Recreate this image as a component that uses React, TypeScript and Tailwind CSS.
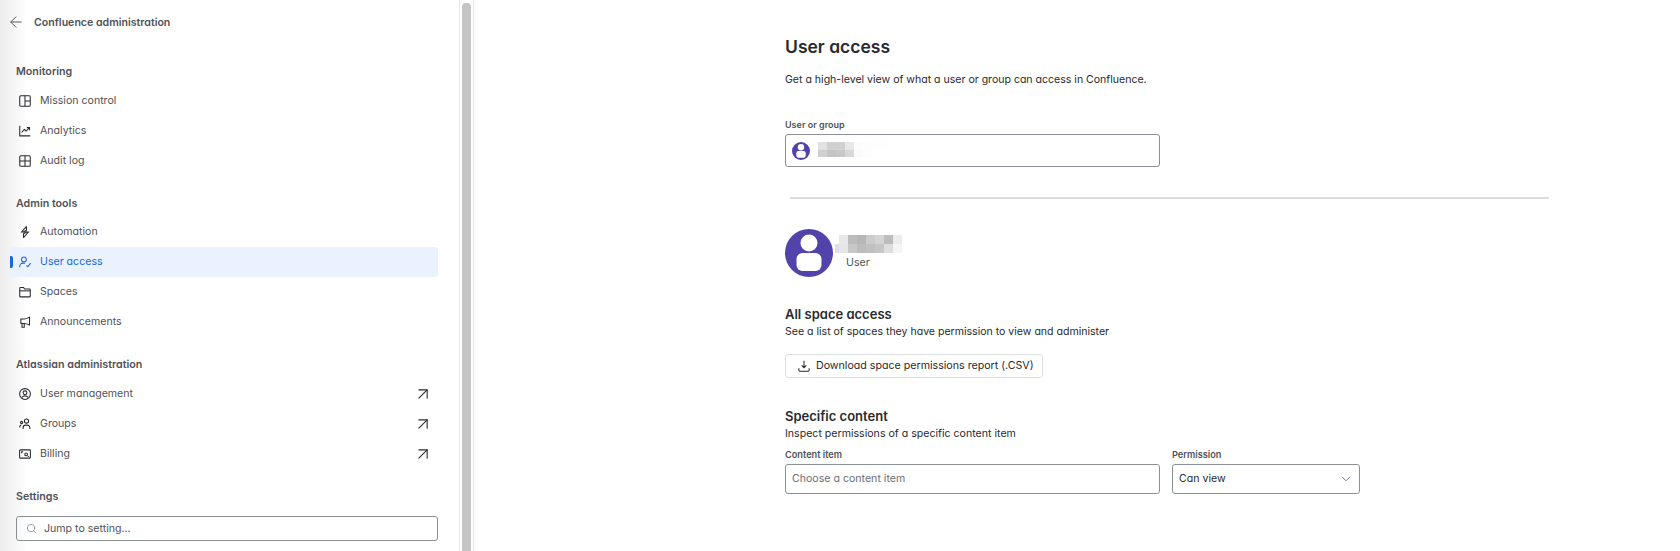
import React from "react";
import { ArrowLeft, ArrowUpRight, ChevronDown, Search } from "lucide-react";

const Ico = ({ d, className = "text-[#292a2e]" }: { d: React.ReactNode; className?: string }) => (
  <svg width="12" height="12" viewBox="0 0 16 16" fill="none" stroke="currentColor" strokeWidth="1.4" className={"shrink-0 " + className}>
    {d}
  </svg>
);

const icons: Record<string, React.ReactNode> = {
  mission: <><rect x="1" y="1" width="14" height="14" rx="1.5" /><path d="M8 1v14M8 8h7" /></>,
  analytics: <><path d="M1 1v13.500h14" /><path d="M3.500 10l3.500-4 2.500 2 4-4M10.500 3.500h3.500v3.500" /></>,
  audit: <><rect x="1" y="1" width="14" height="14" rx="1.5" /><path d="M8 1v14M1 8h14" /></>,
  automation: <><path d="M10 0.500L3.500 8h9L6 15.500" /><path d="M10 0.500v5L6 8M6 15.500v-5L10 8" /></>,
  user: <><circle cx="6.500" cy="4.500" r="3.200" /><path d="M1 15v-1.500a4 4 0 0 1 4-4h3" /><path d="M10 12.500l1.800 1.800 3.700-4.800" /></>,
  spaces: <><path d="M1 13.500V3a1 1 0 0 1 1-1h4l1.500 2H14a1 1 0 0 1 1 1v8.500a1 1 0 0 1-1 1H2a1 1 0 0 1-1-1z" /><path d="M1 6.500h14" /></>,
  announce: <><path d="M14 1.500v10.500c-2-1-4-2-7-2H2.500V4H7c3 0 5-1.500 7-2.500z" /><path d="M4 10v5h3v-5" /></>,
  mgmt: <><circle cx="8" cy="8" r="7.200" /><circle cx="8" cy="6.300" r="2.500" /><path d="M3.800 12.500c1-1.300 2.500-2 4.200-2s3.200 0.700 4.200 2" /></>,
  groups: <><circle cx="10" cy="4" r="2.800" /><path d="M5.500 14.500v-1.500a3.500 3.500 0 0 1 3.500-3.500h2a3.500 3.500 0 0 1 3.500 3.500v1.500" /><circle cx="3.500" cy="6" r="1.500" /><path d="M1 12.500v-1a2 2 0 0 1 2-2" /></>,
  billing: <><rect x="0.800" y="2.500" width="14.400" height="11" rx="1" /><circle cx="9.500" cy="8.500" r="1.800" /><path d="M3.500 7V5h2M12.500 12v-1.500" /></>,
};

const NavItem = ({ icon, label, active, ext }: { icon: string; label: string; active?: boolean; ext?: boolean }) => (
  <div className={"relative h-[30px] flex items-center pl-[9px] pr-[5px] rounded-[3px] " + (active ? "bg-[#e9f2fe] text-[#1868db]" : "text-[#505258]")}>
    {active && <span className="absolute left-0 top-[9px] h-[12px] w-[3px] rounded-r-[2px] bg-[#1868db]" />}
    <Ico d={icons[icon]} className={active ? "text-[#1868db]" : "text-[#292a2e]"} />
    <span className="ml-[9px] flex-1 text-[10.6px] leading-[30px]">{label}</span>
    {ext && <ArrowUpRight size={20} strokeWidth={1.3} className="text-[#292a2e]" />}
  </div>
);

const Heading = ({ children, className = "" }: { children: React.ReactNode; className?: string }) => (
  <div className={"pl-[6px] text-[10.7px] leading-4 font-semibold text-[#505258] " + className}>{children}</div>
);

const Blur = ({ cw, ch, cells }: { cw: number; ch: number; cells: string[][] }) => (
  <svg width={cw * cells[0].length} height={ch * cells.length} className="block shrink-0 blur-[0.6px]">
    {cells.map((row, r) =>
      row.map((f, c) => <rect key={r + "-" + c} x={c * cw} y={r * ch} width={cw} height={ch} fill={f} />)
    )}
  </svg>
);

const Avatar = ({ size }: { size: number }) => (
  <svg width={size} height={size} viewBox="0 0 48 48" className="shrink-0">
    <circle cx="24" cy="24" r="24" fill="#5243aa" />
    <circle cx="24" cy="14" r="8.500" fill="#fff" />
    <rect x="11.500" y="24" width="25" height="18" rx="6" fill="#fff" />
  </svg>
);

export default function App() {
  return (
    <div className="w-[1680px] h-[551px] overflow-hidden flex bg-white font-['Inter',sans-serif] [font-feature-settings:'cv11'] text-[#292a2e]">
      <aside className="w-[459px] h-full shrink-0 pl-[10px] pr-[21px] bg-gradient-to-r from-[#ececec] via-white via-[6%] to-white">
        <div className="h-[44px] flex items-center">
          <ArrowLeft size={18} strokeWidth={1.25} className="text-[#505258] -ml-[3px]" />
          <span className="ml-[9px] mt-px text-[10.6px] font-semibold text-[#505258]">Confluence administration</span>
        </div>
        <Heading className="mt-[20px]">Monitoring</Heading>
        <div className="mt-[6px]">
          <NavItem icon="mission" label="Mission control" />
          <NavItem icon="analytics" label="Analytics" />
          <NavItem icon="audit" label="Audit log" />
        </div>
        <Heading className="mt-[20px]">Admin tools</Heading>
        <div className="mt-[5px]">
          <NavItem icon="automation" label="Automation" />
          <NavItem icon="user" label="User access" active />
          <NavItem icon="spaces" label="Spaces" />
          <NavItem icon="announce" label="Announcements" />
        </div>
        <Heading className="mt-[20px]">Atlassian administration</Heading>
        <div className="mt-[6px]">
          <NavItem icon="mgmt" label="User management" ext />
          <NavItem icon="groups" label="Groups" ext />
          <NavItem icon="billing" label="Billing" ext />
        </div>
        <Heading className="mt-[20px]">Settings</Heading>
        <div className="mt-[11px] ml-[6px] h-[25px] border border-[#8c8f97] rounded-[3px] flex items-center pl-[9px]">
          <Search size={11} strokeWidth={1.4} className="text-[#6b6e76]" />
          <span className="ml-[7px] text-[10.6px] text-[#505258]">Jump to setting...</span>
        </div>
      </aside>
      <div className="w-[15px] h-full shrink-0 border-x border-[#e6e6e6] bg-white pt-[3px] flex justify-center">
        <div className="w-[9px] h-full rounded-t-[4px] bg-[#c4c4c4]" />
      </div>
      <main className="flex-1 pl-[311px]">
        <h1 className="mt-[33px] text-[17.5px] leading-[28px] font-semibold text-[#292a2e]">User access</h1>
        <p className="mt-[11px] text-[10.55px] leading-[16px]">Get a high-level view of what a user or group can access in Confluence.</p>
        <div className="mt-[30px] text-[9px] leading-[14px] font-semibold text-[#505258]">User or group</div>
        <div className="mt-[2px] w-[375px] h-[33px] border border-[#8c8f97] rounded-[3px] flex items-center pl-[6px]">
          <Avatar size={18} />
          <div className="ml-[8px] -mt-[3px]">
            <Blur
              cw={9}
              ch={7.500}
              cells={[
                ["#e2e2e2", "#d0d0d0", "#d0d0d0", "#e8e8e8", "#fcfcfc", "#fdfdfd", "#fefefe", "#fefefe"],
                ["#cfcfcf", "#c4c4c4", "#c8c8c8", "#d8d8d8", "#fafafa", "#fdfdfd", "#ffffff", "#ffffff"],
              ]}
            />
          </div>
        </div>
        <hr className="mt-[30px] ml-[5px] w-[759px] border-0 h-[2px] bg-[#dddddd]" />
        <div className="mt-[30px] flex items-start h-[48px]">
          <Avatar size={48} />
          <div className="ml-[2px] w-[90px]">
            <div className="mt-[6px] flex items-end">
              <div className="w-[4px] h-[9px] bg-[#e0dcf2]" />
              <Blur
                cw={9}
                ch={9}
                cells={[
                  ["#e8e8e8", "#bcbcbc", "#b6b6b6", "#cccccc", "#d4d4d4", "#bcbcbc", "#ececec"],
                  ["#e6e6e6", "#c8c8c8", "#bcbcbc", "#c0c0c0", "#c6c6c6", "#dedede", "#f5f5f5"],
                ]}
              />
            </div>
            <div className="ml-[11px] mt-[2px] text-[10.6px] leading-4 text-[#505258]">User</div>
          </div>
        </div>
        <h2 className="mt-[28px] text-[13px] leading-[18px] font-semibold">All space access</h2>
        <p className="text-[10.55px] leading-[16px] mt-[1px]">See a list of spaces they have permission to view and administer</p>
        <button className="mt-[14px] h-[24px] w-[258px] border border-[#dddee1] rounded-[3px] flex items-center pl-[12px] bg-white">
          <svg width="12" height="12" viewBox="0 0 14 14" fill="none" stroke="#292a2e" strokeWidth="1.2" className="shrink-0">
            <path d="M7 1v8M4.300 6.300L7 9l2.700-2.700M1 9.500v2.500a1 1 0 0 0 1 1h10a1 1 0 0 0 1-1V9.500" />
          </svg>
          <span className="ml-[6px] text-[10.65px] text-[#292a2e] whitespace-nowrap">Download space permissions report (.CSV)</span>
        </button>
        <h2 className="mt-[29px] text-[13px] leading-[18px] font-semibold">Specific content</h2>
        <p className="mt-[1px] text-[10.6px] leading-[16px]">Inspect permissions of a specific content item</p>
        <div className="mt-[6px] flex gap-[12px]">
          <div className="w-[375px]">
            <div className="text-[9.2px] leading-[14px] font-semibold text-[#505258]">Content item</div>
            <div className="mt-[2px] h-[30px] border border-[#8c8f97] rounded-[3px] flex items-center pl-[6px] text-[10.6px] text-[#6b6e76]">Choose a content item</div>
          </div>
          <div className="w-[188px]">
            <div className="text-[9.2px] leading-[14px] font-semibold text-[#505258]">Permission</div>
            <div className="mt-[2px] h-[30px] border border-[#8c8f97] rounded-[3px] flex items-center justify-between pl-[6px] pr-[6px] text-[10.6px]">
              Can view
              <ChevronDown size={14} strokeWidth={1.3} className="text-[#505258]" />
            </div>
          </div>
        </div>
      </main>
    </div>
  );
}
